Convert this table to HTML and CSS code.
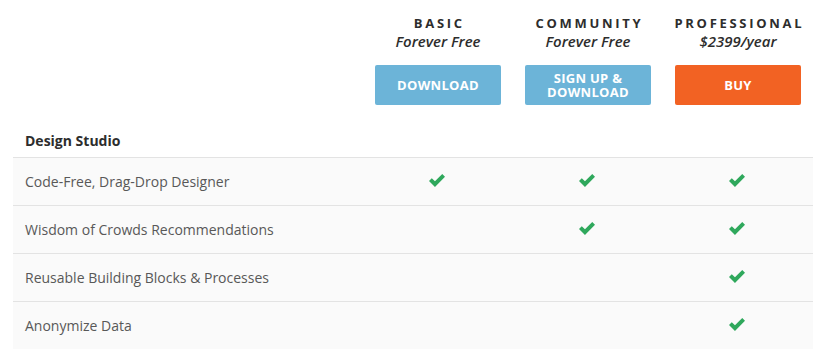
FILE: index.html
```html
<!DOCTYPE html>
<html lang="en">
<head>
<meta charset="utf-8">
<title>Editions</title>
<link rel="stylesheet" href="styles.css">
</head>
<body>
<div class="pricing">
  <div class="plans">
    <div class="plan-spacer"></div>
    <div class="plan">
      <div class="plan-name">BASIC</div>
      <div class="plan-price">Forever Free</div>
      <a class="btn btn-blue" href="#">DOWNLOAD</a>
    </div>
    <div class="plan">
      <div class="plan-name">COMMUNITY</div>
      <div class="plan-price">Forever Free</div>
      <a class="btn btn-blue btn-two" href="#"><span>SIGN UP &amp;</span><span>DOWNLOAD</span></a>
    </div>
    <div class="plan">
      <div class="plan-name">PROFESSIONAL</div>
      <div class="plan-price">$2399/year</div>
      <a class="btn btn-orange" href="#">BUY</a>
    </div>
  </div>

  <div class="section-title">Design Studio</div>

  <div class="features">
    <div class="row">
      <div class="feature">Code-Free, Drag-Drop Designer</div>
      <div class="cell"><svg class="check" viewBox="0 0 15 14"><path d="M0 7.4 L2.6 4.8 L5.6 7.8 L12.4 1 L15 3.6 L5.6 13.2 Z"/></svg></div>
      <div class="cell"><svg class="check" viewBox="0 0 15 14"><path d="M0 7.4 L2.6 4.8 L5.6 7.8 L12.4 1 L15 3.6 L5.6 13.2 Z"/></svg></div>
      <div class="cell"><svg class="check" viewBox="0 0 15 14"><path d="M0 7.4 L2.6 4.8 L5.6 7.8 L12.4 1 L15 3.6 L5.6 13.2 Z"/></svg></div>
    </div>
    <div class="row">
      <div class="feature">Wisdom of Crowds Recommendations</div>
      <div class="cell"></div>
      <div class="cell"><svg class="check" viewBox="0 0 15 14"><path d="M0 7.4 L2.6 4.8 L5.6 7.8 L12.4 1 L15 3.6 L5.6 13.2 Z"/></svg></div>
      <div class="cell"><svg class="check" viewBox="0 0 15 14"><path d="M0 7.4 L2.6 4.8 L5.6 7.8 L12.4 1 L15 3.6 L5.6 13.2 Z"/></svg></div>
    </div>
    <div class="row">
      <div class="feature">Reusable Building Blocks &amp; Processes</div>
      <div class="cell"></div>
      <div class="cell"></div>
      <div class="cell"><svg class="check" viewBox="0 0 15 14"><path d="M0 7.4 L2.6 4.8 L5.6 7.8 L12.4 1 L15 3.6 L5.6 13.2 Z"/></svg></div>
    </div>
    <div class="row">
      <div class="feature">Anonymize Data</div>
      <div class="cell"></div>
      <div class="cell"></div>
      <div class="cell"><svg class="check" viewBox="0 0 15 14"><path d="M0 7.4 L2.6 4.8 L5.6 7.8 L12.4 1 L15 3.6 L5.6 13.2 Z"/></svg></div>
    </div>
  </div>
</div>
</body>
</html>
```
FILE: styles.css
```css
* { box-sizing: border-box; }

body {
  margin: 0;
  background: #fff;
  font-family: "Open Sans", "Noto Sans", sans-serif;
  color: #333;
}

.pricing {
  width: 800px;
  margin-left: 13px;
}

.plans,
.row {
  display: grid;
  grid-template-columns: 350px 150px 150px 150px;
}

.plan {
  padding: 14px 12px 0;
  display: flex;
  flex-direction: column;
  align-items: center;
  text-align: center;
}

.plan-name {
  font-size: 13px;
  font-weight: 700;
  letter-spacing: 2.7px;
  line-height: 18px;
  color: #2d2d2d;
  margin-right: -2.7px;
}

.plan-price {
  font-size: 15px;
  font-weight: 600;
  font-style: italic;
  line-height: 18px;
  color: #2d2d2d;
}

.btn {
  margin-top: 15px;
  width: 126px;
  height: 40px;
  border-radius: 2px;
  display: flex;
  flex-direction: column;
  align-items: center;
  justify-content: center;
  color: #fff;
  font-size: 13px;
  font-weight: 700;
  line-height: 14px;
  text-decoration: none;
  letter-spacing: 0.3px;
}

.btn-two span {
  display: block;
  height: 14px;
}

.btn-blue { background: #6cb4d8; }
.btn-orange { background: #f26223; }

.section-title {
  padding: 26px 12px 6px;
  font-size: 14px;
  font-weight: 700;
  line-height: 20px;
  color: #2d2d2d;
  border-bottom: 1px solid #e3e3e3;
}

.row {
  background: #fafafa;
  border-bottom: 1px solid #e3e3e3;
}

.row:last-child { border-bottom: none; }

.feature {
  padding: 14px 12px 13px;
  font-size: 14px;
  line-height: 20px;
  color: #585858;
}

.cell {
  display: flex;
  align-items: center;
  justify-content: center;
  padding-right: 3px;
  padding-bottom: 3px;
}

.check {
  width: 16px;
  height: 15px;
  fill: #2fa85c;
}
```
